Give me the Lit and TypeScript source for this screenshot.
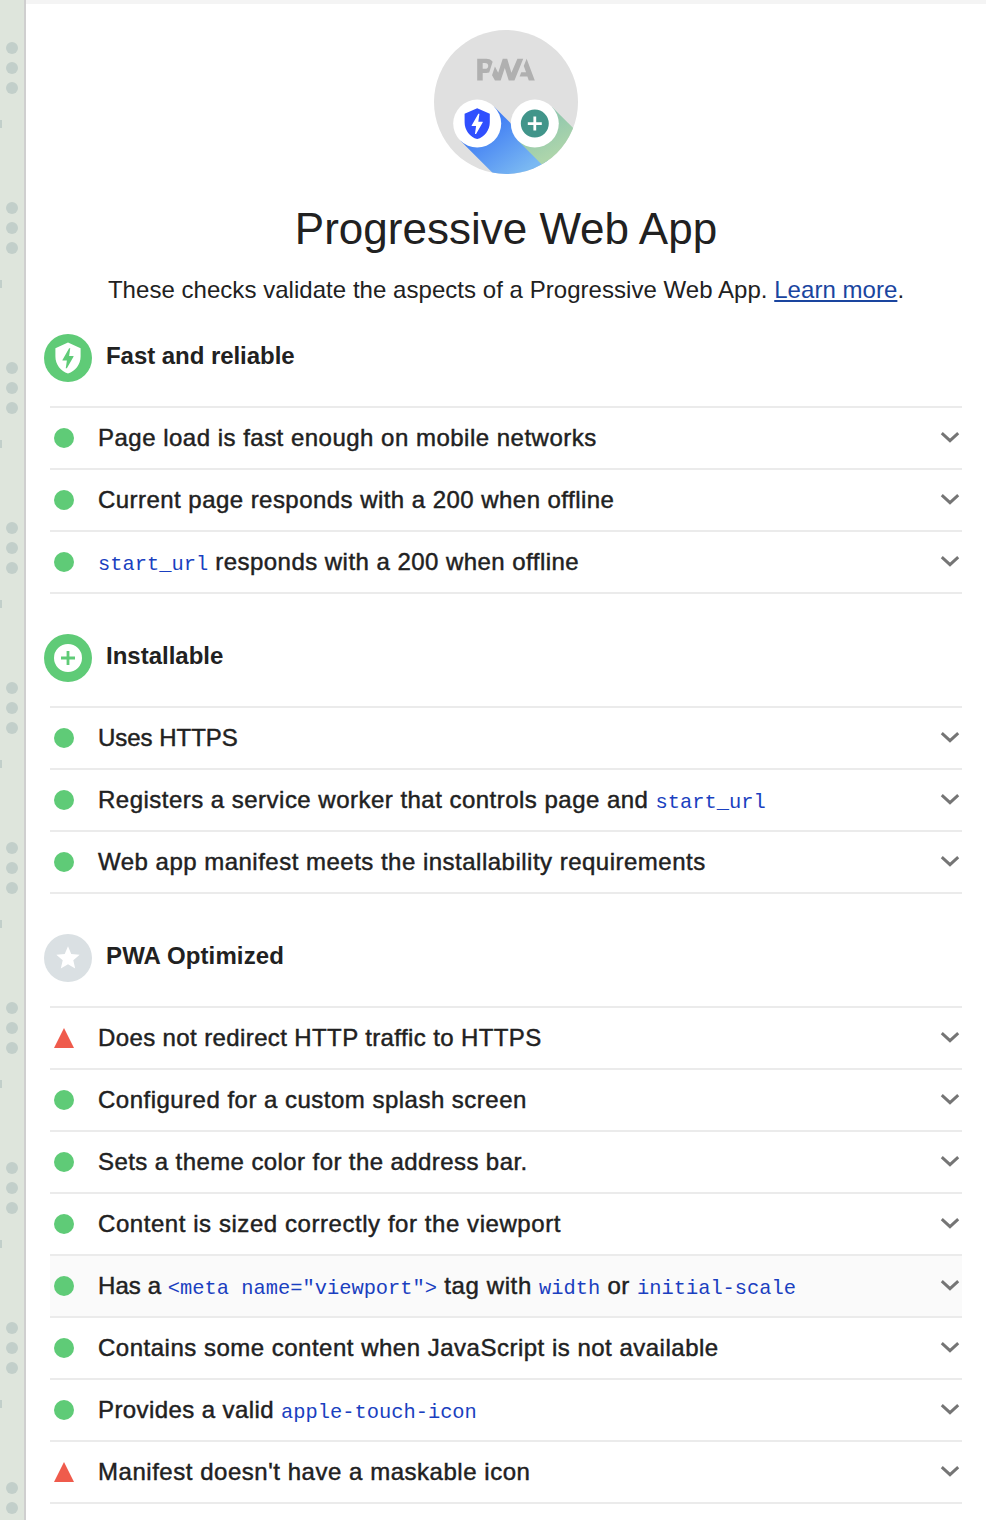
import { LitElement, html, css, svg } from "lit";
import { customElement, property } from "lit/decorators.js";

type Part = { text: string; ls: number } | { code: string };
interface Audit { parts: Part[]; fail?: boolean; hover?: boolean; }
interface Group { icon: string; title: string; ls: number; audits: Audit[]; }

const c = (code: string): Part => ({ code });
const t = (text: string, ls: number): Part => ({ text, ls });

const GROUPS: Group[] = [
  { icon: "fast", title: "Fast and reliable", ls: -0.05, audits: [
    { parts: [t("Page load is fast enough on mobile networks", 0.49)] },
    { parts: [t("Current page responds with a 200 when offline", 0.455)] },
    { parts: [c("start_url"), t(" responds with a 200 when offline", 0.46)] },
  ] },
  { icon: "install", title: "Installable", ls: 0, audits: [
    { parts: [t("Uses HTTPS", -0.03)] },
    { parts: [t("Registers a service worker that controls page and ", 0.48), c("start_url")] },
    { parts: [t("Web app manifest meets the installability requirements", 0.49)] },
  ] },
  { icon: "star", title: "PWA Optimized", ls: 0.12, audits: [
    { parts: [t("Does not redirect HTTP traffic to HTTPS", 0.385)], fail: true },
    { parts: [t("Configured for a custom splash screen", 0.485)] },
    { parts: [t("Sets a theme color for the address bar.", 0.41)] },
    { parts: [t("Content is sized correctly for the viewport", 0.56)] },
    { parts: [t("Has a ", 0.08), c('<meta name="viewport">'), t(" tag with ", 0.6), c("width"), t(" or ", 0.5), c("initial-scale")], hover: true },
    { parts: [t("Contains some content when JavaScript is not available", 0.5)] },
    { parts: [t("Provides a valid ", 0.41), c("apple-touch-icon")] },
    { parts: [t("Manifest doesn't have a maskable icon", 0.53)], fail: true },
  ] },
];

const SHIELD = "M12 4.3l6.3 2.8v4.2c0 3.88-2.69 7.52-6.3 8.4-3.61-.88-6.3-4.51-6.3-8.4V7.1L12 4.3zm-.56 12.88l3.3-5.79.04-.08c.05-.1.01-.29-.26-.29h-1.96l.56-3.92h-.56L9.3 12.82c0 .03.07-.12-.03.07-.11.2-.12.37.2.37h1.97l-.56 3.92h.56z";
const PLUS = "M12 5a7 7 0 1 0 0 14 7 7 0 0 0 0-14zm3.5 7.7h-2.8v2.8h-1.4v-2.8H8.5v-1.4h2.8V8.5h1.4v2.8h2.8v1.4z";
const STAR = "M12 15.07l3.6 2.18-.95-4.1 3.18-2.76-4.2-.36L12 6.17l-1.64 3.86-4.2.36 3.2 2.76-.96 4.1z";
const ICONS: Record<string, { fill: string; path: string }> = {
  fast: { fill: "#5fcb77", path: SHIELD },
  install: { fill: "#5fcb77", path: PLUS },
  star: { fill: "#dae0e3", path: STAR },
};

@customElement("audit-row")
class AuditRow extends LitElement {
  @property({ attribute: false }) audit!: Audit;
  static styles = css`
    :host { display: block; }
    .row { display: flex; align-items: center; height: 60px; border-bottom: 2px solid #ebebeb; padding: 0 2px 0 4px; }
    .hover { background: #fafafa; }
    .mark { width: 20px; height: 20px; flex: none; margin-right: 24px; }
    .text { flex: 1; white-space: pre; font-size: 24px; line-height: 30px; color: #212121; -webkit-text-stroke: 0.45px #212121; }
    code { font: 20.4px "Liberation Mono", monospace; line-height: 24px; color: #1a3fc0; -webkit-text-stroke: 0; }
    .chev { width: 20px; height: 12px; flex: none; }
  `;
  render() {
    const a = this.audit;
    return html`<div class="row ${a.hover ? "hover" : ""}">
      <svg class="mark" viewBox="0 0 20 20">${a.fail
        ? svg`<path fill="#ef5b4c" d="M10 0L20 20H0z"/>`
        : svg`<circle fill="#5fcb77" cx="10" cy="10" r="10"/>`}</svg>
      <div class="text">${a.parts.map((p) => "code" in p
        ? html`<code>${p.code}</code>`
        : html`<span style="letter-spacing:${p.ls}px">${p.text}</span>`)}</div>
      <svg class="chev" viewBox="0 0 20 12"><path d="M1.8 1.2L10 8.7L18.2 1.2" fill="none" stroke="#757575" stroke-width="3"/></svg>
    </div>`;
  }
}

@customElement("pwa-gauge")
class PwaGauge extends LitElement {
  static styles = css`
    :host { display: block; width: 144px; height: 144px; }
    svg { display: block; width: 144px; height: 144px; }
  `;
  render() {
    return html`<svg viewBox="0 0 60 60">
      <defs>
        <linearGradient id="blue" gradientUnits="userSpaceOnUse" x1="20" y1="38" x2="36" y2="60"><stop offset="0" stop-color="#3b78f4"/><stop offset="1" stop-color="#7ab8f2"/></linearGradient>
        <linearGradient id="green" gradientUnits="userSpaceOnUse" x1="46" y1="34" x2="54" y2="50"><stop offset="0" stop-color="#8cc5ae"/><stop offset="1" stop-color="#add5ab"/></linearGradient>
        <clipPath id="disc"><circle cx="30" cy="30" r="30"/></clipPath>
      </defs>
      <circle cx="30" cy="30" r="30" fill="#e0e0e0"/>
      <g fill="#b0b0b0">
        <path d="M35.66 19.39l.7-1.75h2L37.4 15 38.6 12l3.4 9h-2.51l-.58-1.61z"/>
        <path d="M33.52 21l3.65-9h-2.42l-2.5 5.82L30.5 12h-1.86l-1.9 5.82-1.35-2.65-1.21 3.72L25.4 21h2.38l1.72-5.2 1.64 5.2z"/>
        <path d="M20.3 17.91h1.48c.45 0 .85-.05 1.2-.15l.39-1.18 1.07-3.3a2.64 2.64 0 0 0-.28-.37c-.55-.6-1.36-.91-2.42-.91H18v9h2.3V17.9zm1.96-3.84c.22.22.33.5.33.87 0 .36-.1.65-.29.87-.2.23-.59.35-1.15.35h-.86v-2.41h.87c.52 0 .89.1 1.1.32z"/>
      </g>
      <g clip-path="url(#disc)">
        <path fill="url(#blue)" d="M10.93 46.07L25.07 31.93L60 66.86V80H44.86z"/>
        <path fill="url(#green)" d="M34.93 46.07L49.07 31.93L70 52.86L60 71.14z"/>
      </g>
      <circle cx="18" cy="39" r="10" fill="#fff"/>
      <circle cx="42" cy="39" r="10" fill="#fff"/>
      <path transform="translate(8 29) scale(.8333)" fill="#304ffe" d=${SHIELD}></path>
      <path transform="translate(32 29) scale(.8333)" fill="#41958a" d=${PLUS}></path>
    </svg>`;
  }
}

@customElement("app-root")
class AppRoot extends LitElement {
  static styles = css`
    :host { display: flex; height: 1520px; overflow: hidden; box-sizing: border-box; background: #fff; font-family: "Liberation Sans", Arial, sans-serif; color: #212121; }
    .rail { flex: none; width: 24px; background: #dee5dc; border-right: 2px solid #cfcfcf; }
    .rail svg { display: block; }
    .page { flex: 1; border-top: 4px solid #f4f4f4; padding: 26px 24px 0; }
    .head { display: flex; flex-direction: column; align-items: center; }
    h1 { margin: 27px 0 0; font-size: 44px; line-height: 56px; font-weight: 400; white-space: nowrap; }
    p { margin: 18px 0 0; font-size: 24px; line-height: 30px; white-space: nowrap; letter-spacing: 0.04px; }
    a { color: #1a459f; text-decoration: underline; }
    .group { margin-bottom: 40px; }
    .head + .group { margin-top: 29px; }
    .gh { display: flex; height: 48px; margin: 0 0 24px -6px; }
    .gh svg { width: 48px; height: 48px; margin-right: 14px; }
    h2 { margin: 0; font-size: 24px; line-height: 44px; font-weight: 700; white-space: nowrap; }
    .list { border-top: 2px solid #ebebeb; }
  `;
  render() {
    return html`
      <div class="rail"><svg width="24" height="1520">
        <defs><pattern id="dots" width="24" height="160" patternUnits="userSpaceOnUse">
          <g fill="#c2cfca"><circle cx="12" cy="48" r="6"/><circle cx="12" cy="68" r="6"/><circle cx="12" cy="88" r="6"/><rect x="0" y="120" width="2" height="8"/></g>
        </pattern></defs>
        <rect width="24" height="1520" fill="url(#dots)"/></svg></div>
      <div class="page">
        <div class="head">
          <pwa-gauge></pwa-gauge>
          <h1>Progressive Web App</h1>
          <p>These checks validate the aspects of a Progressive Web App. <a>Learn more</a>.</p>
        </div>
        ${GROUPS.map((g) => html`<div class="group">
          <div class="gh">
            <svg viewBox="0 0 24 24"><circle cx="12" cy="12" r="12" fill=${ICONS[g.icon].fill}></circle><path fill="#fff" d=${ICONS[g.icon].path}></path></svg>
            <h2><span style="letter-spacing:${g.ls}px">${g.title}</span></h2>
          </div>
          <div class="list">${g.audits.map((a) => html`<audit-row .audit=${a}></audit-row>`)}</div>
        </div>`)}
      </div>`;
  }
}
